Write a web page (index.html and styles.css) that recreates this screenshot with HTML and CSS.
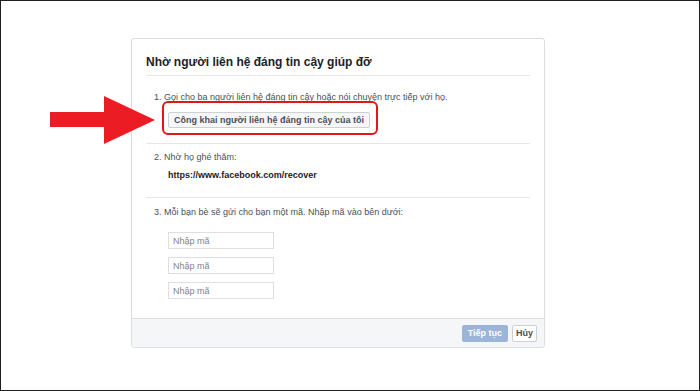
FILE: index.html
```html
<!DOCTYPE html>
<html lang="vi">
<head>
    <meta charset="UTF-8">
    <meta name="viewport" content="width=device-width, initial-scale=1.0">
    <title>Nhờ người liên hệ đáng tin cậy giúp đỡ</title>
    <link rel="stylesheet" href="styles.css">
</head>
<body>
    <div class="frame">
        <!-- red annotation arrow -->
        <svg class="arrow" width="110" height="52" viewBox="0 0 110 52">
            <polygon points="0,16 54,16 54,0 105,24 54,48 54,31 0,31" fill="#ec1c24"/>
        </svg>

        <div class="dialog">
            <div class="dialog-header">
                <h2>Nhờ người liên hệ đáng tin cậy giúp đỡ</h2>
            </div>

            <div class="step step-one">
                <p>1. Gọi cho ba người liên hệ đáng tin cậy hoặc nói chuyện trực tiếp với họ.</p>
                <div class="indent">
                    <span class="highlight">
                        <button class="btn-light">Công khai người liên hệ đáng tin cậy của tôi</button>
                    </span>
                </div>
            </div>

            <div class="step step-two">
                <p>2. Nhờ họ ghé thăm:</p>
                <p class="indent url">https://www.facebook.com/recover</p>
            </div>

            <div class="step step-three">
                <p>3. Mỗi bạn bè sẽ gửi cho bạn một mã. Nhập mã vào bên dưới:</p>
                <div class="indent codes">
                    <input type="text" placeholder="Nhập mã">
                    <input type="text" placeholder="Nhập mã">
                    <input type="text" placeholder="Nhập mã">
                </div>
            </div>

            <div class="dialog-footer">
                <button class="btn-primary">Tiếp tục</button>
                <button class="btn-cancel">Hủy</button>
            </div>
        </div>
    </div>
</body>
</html>
```

FILE: styles.css
```css
body {
    margin: 0;
    font-family: "Liberation Sans", Arial, sans-serif;
    color: #4b4f56;
    background: #fff;
}

.frame {
    position: relative;
    width: 700px;
    height: 391px;
    box-sizing: border-box;
    border: 1px solid #1f1f1f;
    overflow: hidden;
}

.arrow {
    position: absolute;
    left: 49px;
    top: 95px;
}

.dialog {
    width: 414px;
    box-sizing: border-box;
    margin: 37px 0 0 130px;
    border: 1px solid #dcdee3;
    border-radius: 3px;
    background: #fff;
}

.dialog-header {
    margin: 0 14px;
    padding: 16px 0 6px;
    border-bottom: 1px solid #e5e6e9;
}

h2 {
    margin: 0;
    font-size: 12px;
    line-height: 14px;
    color: #1d2129;
}

.step {
    margin: 0 14px;
    padding: 0 8px;
    font-size: 9px;
    line-height: 12px;
}

.step p {
    margin: 0;
}

.step-one {
    padding-top: 15px;
    padding-bottom: 15px;
    border-bottom: 1px solid #e5e6e9;
}

.step-two {
    padding-top: 7px;
    padding-bottom: 16px;
    border-bottom: 1px solid #e5e6e9;
}

.step-three {
    padding-top: 8px;
    padding-bottom: 19px;
}

.indent {
    padding-left: 14px;
}

.step-one .indent {
    margin-top: 9px;
}

.highlight {
    position: relative;
    display: inline-block;
}

.highlight::after {
    content: "";
    position: absolute;
    left: -6px;
    right: -8px;
    top: -11px;
    bottom: -7px;
    border: 2px solid #e3161d;
    border-radius: 6px;
}

.btn-light {
    display: block;
    font-family: inherit;
    font-size: 9px;
    font-weight: bold;
    line-height: 14px;
    padding: 0 5px;
    border: 1px solid #ced0d4;
    border-radius: 2px;
    background: #f6f7f9;
    color: #4b4f56;
}

.url {
    margin-top: 6px !important;
    font-weight: bold;
    color: #1d2129;
}

.codes {
    margin-top: 14px;
    display: flex;
    flex-direction: column;
    gap: 8px;
}

.codes input {
    width: 106px;
    height: 17px;
    box-sizing: border-box;
    padding: 0 4px;
    border: 1px solid #dddfe2;
    font-family: inherit;
    font-size: 9px;
    color: #1d2129;
}

.codes input::placeholder {
    color: #7f838a;
}

.dialog-footer {
    display: flex;
    justify-content: flex-end;
    gap: 4px;
    padding: 6px 7px 5px;
    border-top: 1px solid #dddfe2;
    background: #f5f6f7;
    border-radius: 0 0 3px 3px;
}

.dialog-footer button {
    font-family: inherit;
    font-size: 9px;
    font-weight: bold;
    line-height: 15px;
    border-radius: 2px;
}

.btn-primary {
    padding: 0 5px;
    border: 1px solid #9cb4d8;
    background: #9cb4d8;
    color: #fff;
}

.btn-cancel {
    padding: 0 3px;
    border: 1px solid #ced0d4;
    background: #fff;
    color: #4b4f56;
}
```
